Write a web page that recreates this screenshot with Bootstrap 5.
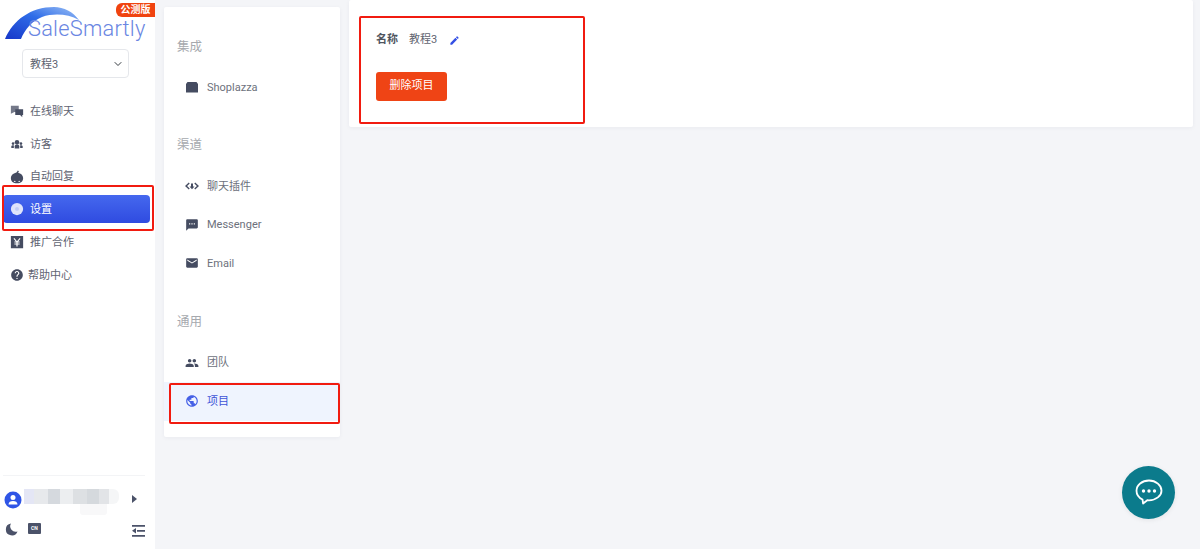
<!DOCTYPE html>
<html lang="zh-CN">
  <head>
    <meta charset="UTF-8" />
    <meta name="viewport" content="width=device-width, initial-scale=1.0" />
    <title>SaleSmartly</title>
    <link href="https://cdn.jsdelivr.net/npm/bootstrap@5.3.0/dist/css/bootstrap.min.css" rel="stylesheet" />
    <style>
      html, body { height: 100%; }
      body {
        background: #f4f5f8;
        overflow: hidden;
        font-family: Roboto, "Noto Sans CJK SC", sans-serif;
        font-size: 11px;
      }
      .page-wrap { height: 549px; }
      .side-bar { width: 155px; height: 549px; flex: none; background: #fff; }
      .logo-box { height: 42px; position: relative; }
      .logo-arc { position: absolute; left: 4px; top: 5px; }
      .logo-text {
        position: absolute; left: 28px; top: 14px;
        font-size: 21.8px; line-height: 30px; font-weight: 300;
        color: #6a86e2; letter-spacing: .25px;
      }
      .beta-tag {
        position: absolute; left: 116px; top: 3px; width: 39px; height: 13.5px;
        background: #f0430f; color: #fff; font-size: 10px; line-height: 13.5px; font-weight: 700;
        text-align: center; border-radius: 6px 0 0 6px;
      }
      .project-select {
        width: 107px; height: 29px; margin: 7px 0 0 22px; padding: 4px 20px 0 7px;
        font-size: 11px; color: #5d6270; border-color: #e5e7eb; border-radius: 4px;
        background-position: right 5px center; background-size: 10px 8px;
      }
      .side-menu { margin-top: 19px; }
      .side-item {
        height: 28px; margin: 0 5px 4.8px 3px; padding-left: 7px; gap: 6px;
        color: #5f6472; border-radius: 4px; font-size: 11px;
      }
      .side-item span { padding-top: 2px; }
      .side-item svg { width: 14px; height: 14px; fill: #454c61; flex: none; }
      .side-item.is-active { background: linear-gradient(180deg, #4568ee, #2f4be0); color: #fff; }
      .side-item.is-active svg { fill: #dfe4fb; }
      .side-item .help-label { margin-left: -2px; }
      .side-foot { margin-top: auto; padding: 0 0 7px 0; }
      .foot-user { margin: 0 10px 0 3px; border-top: 1px solid #f3f4f6; padding-top: 12px; position: relative; height: 41px; }
      .foot-avatar { display: block; margin: 2.5px 0 0 1px; }
      .blur-name {
        position: absolute; left: 21px; top: 13px; width: 95px; height: 15px;
        border-radius: 0 6px 6px 0;
        background: linear-gradient(90deg, #e4e6f5 0 10%, #e7e9ec 10% 25%, #d5d9de 25% 38%, #eceef0 38% 52%, #dde0e3 52% 66%, #d5d9dd 66% 79%, #e2e4e7 79% 89%, #f5f6f7 89%);
      }
      .blur-sub { position: absolute; left: 77px; top: 28px; width: 27px; height: 11px; background: #f8f8f9; border-radius: 0 0 3px 3px; }
      .foot-arrow { position: absolute; left: 129px; top: 19px; }
      .foot-tools { height: 26px; padding: 0 10px 0 5px; }
      .moon-icon { margin-right: 10px; }
      .cn-tag {
        display: inline-block; width: 13px; height: 11px; margin-top: -2px; background: #4b5269; color: #fff;
        font-size: 5px; line-height: 11px; text-align: center; border-radius: 1px; font-weight: 700;
      }
      .fold-icon { margin-top: 3px; }
      .sub-card { width: 176px; height: 430px; margin: 7px 9px 0 9px; flex: none; padding: 30px 0 0 0; }
      .panel-card { border: 0; border-radius: 2px; box-shadow: 0 1px 4px rgba(30, 40, 70, .05); background: #fff; }
      .sub-head { height: 20px; line-height: 20px; font-size: 12.5px; color: #a6a9ae; padding-left: 13px; margin-bottom: 11.5px; }
      .sub-group { margin-bottom: 29px; }
      .sub-group:first-child .sub-head { margin-bottom: 10.5px; }
      .sub-item { height: 38.7px; padding-left: 21px; gap: 8px; color: #6d717c; font-size: 11px; }
      .sub-item span { padding-top: 2px; }
      .sub-item svg { width: 14px; height: 14px; fill: #454c61; flex: none; }
      .sub-item.is-active { background: #eff4fe; color: #3f55d8; }
      .sub-item.is-active svg { fill: #4560e6; }
      .main-card { width: 844px; height: 127px; flex: none; padding: 33px 0 0 27px; }
      .field-name { font-weight: 700; color: #50555f; margin-right: 11px; }
      .field-value { color: #5f6470; margin-right: 12px; }
      .field-row { height: 15px; }
      .drop-btn {
        width: 71px; height: 29px; margin-top: 24px; padding: 0;
        background: #ef4415; border: 0; color: #fff; font-size: 11px; border-radius: 3px;
      }
      .note-box { position: absolute; border: 2.5px solid #f11b10; border-radius: 2px; pointer-events: none; }
      .note-a { left: 2px; top: 185px; width: 152px; height: 46px; }
      .note-b { left: 169px; top: 383px; width: 171px; height: 41px; }
      .note-c { left: 359px; top: 16px; width: 226px; height: 108px; }
      .chat-fab {
        position: fixed; left: 1122px; top: 465.5px; width: 53px; height: 53px; border-radius: 50%;
        background: #0b7b8c; box-shadow: 0 1px 5px rgba(0, 0, 0, .08);
      }
    </style>
  </head>
  <body>
    <div class="page-wrap d-flex">
      <aside class="side-bar d-flex flex-column">
        <div class="logo-box">
          <svg class="logo-arc" width="80" height="36" viewBox="0 0 80 36">
            <defs>
              <linearGradient id="arcFill" x1="0" y1="1" x2="1" y2="0">
                <stop offset="0" stop-color="#1737c9" />
                <stop offset=".55" stop-color="#2f6de8" />
                <stop offset="1" stop-color="#9cc0f5" />
              </linearGradient>
            </defs>
            <path d="M1 34C9 15 27 2 50 2c10 0 19 5 25 13C64 9 50 8 38 12 28 16 21 24 17 34z" fill="url(#arcFill)" />
          </svg>
          <span class="logo-text">SaleSmartly</span>
          <span class="beta-tag">公测版</span>
        </div>
        <select class="form-select project-select">
          <option>教程3</option>
        </select>
        <nav class="side-menu">
          <div class="side-item d-flex align-items-center">
            <svg viewBox="0 0 16 16"><path d="M1 2h9v7H5L1 11z" opacity=".75" /><path d="M6 6h9v6.500h-1V15l-2.500-2.500H6z" /></svg>
            <span>在线聊天</span>
          </div>
          <div class="side-item d-flex align-items-center">
            <svg viewBox="0 0 16 16"><circle cx="8" cy="6" r="2.600" /><path d="M5.400 13v-2.500c0-1.200 1.100-1.900 2.600-1.900s2.600.7 2.600 1.900V13z" /><circle cx="3.500" cy="7.500" r="1.500" /><circle cx="12.500" cy="7.500" r="1.500" /><path d="M1.500 12.500v-1.800c0-.9.8-1.400 2.900-1.400v3.200zM14.500 12.500v-1.800c0-.9-.8-1.400-2.900-1.400v3.200z" /></svg>
            <span>访客</span>
          </div>
          <div class="side-item d-flex align-items-center">
            <svg viewBox="0 0 16 16"><path fill-rule="evenodd" d="M8 3c4 0 7 2.800 7 6.300S12.500 15 8 15s-7-2.200-7-5.700S4 3 8 3zM5.500 12.200a.8.8 0 1 0 0 1.600.8.8 0 0 0 0-1.600zm5 0a.8.8 0 1 0 0 1.600.8.8 0 0 0 0-1.600z" /><path d="M7 3.500 9 .6l1.200.7L8.800 4z" /></svg>
            <span>自动回复</span>
          </div>
          <div class="side-item is-active d-flex align-items-center">
            <svg viewBox="0 0 16 16"><circle cx="8" cy="8" r="7" /><circle cx="8" cy="8" r="2.200" fill="#c3cdf7" /></svg>
            <span>设置</span>
          </div>
          <div class="side-item d-flex align-items-center">
            <svg viewBox="0 0 16 16"><path fill-rule="evenodd" d="M1 1h14v14H1zM5 3.500 8 7l3-3.500 1 .8L9.300 7.500H11v1.200H8.700v1H11v1.200H8.700V13H7.300v-2.100H5V9.700h2.300v-1H5V7.500h1.700L4 4.300z" /></svg>
            <span>推广合作</span>
          </div>
          <div class="side-item d-flex align-items-center">
            <svg viewBox="0 0 24 24"><path d="M12 2C6.480 2 2 6.480 2 12s4.480 10 10 10 10-4.480 10-10S17.520 2 12 2zm1 17h-2v-2h2v2zm2.070-7.750l-.9.92C13.450 12.900 13 13.500 13 15h-2v-.5c0-1.100.45-2.100 1.170-2.830l1.240-1.260c.37-.36.59-.86.59-1.410 0-1.100-.9-2-2-2s-2 .9-2 2H8c0-2.210 1.790-4 4-4s4 1.790 4 4c0 .88-.36 1.680-.93 2.250z" /></svg>
            <span class="help-label">帮助中心</span>
          </div>
        </nav>
        <div class="side-foot">
          <div class="foot-user">
            <svg class="foot-avatar" width="18" height="18" viewBox="0 0 18 18">
              <circle cx="9" cy="9" r="8.500" fill="#2f55e6" />
              <circle cx="9" cy="6.600" r="2.500" fill="#fff" />
              <path d="M4.500 13.500c0-2.300 2-3.400 4.500-3.400s4.500 1.100 4.500 3.400z" fill="#fff" />
            </svg>
            <span class="blur-name"></span>
            <span class="blur-sub"></span>
            <svg class="foot-arrow" width="5" height="8" viewBox="0 0 5 8"><path d="M0 0l5 4-5 4z" fill="#4b5269" /></svg>
          </div>
          <div class="foot-tools d-flex align-items-center">
            <svg class="moon-icon" width="13" height="13" viewBox="0 0 13 13"><path d="M6 .5a6 6 0 1 0 6.500 8A5.500 5.500 0 0 1 6 .5z" fill="#4b5269" /></svg>
            <span class="cn-tag">CN</span>
            <svg class="fold-icon ms-auto" width="13" height="12" viewBox="0 0 13 12"><path d="M0 0h13v1.700H0zM5 5h8v1.700H5zM0 10h13v1.700H0zM4 3v5.500L0 5.800z" fill="#4b5269" /></svg>
          </div>
        </div>
      </aside>

      <div class="panel-card sub-card">
        <div class="sub-group">
          <div class="sub-head">集成</div>
          <div class="sub-item d-flex align-items-center">
            <svg viewBox="0 0 14 14"><path d="M2.500 2h9l1.500 2v8.500H1V4z" /></svg>
            <span>Shoplazza</span>
          </div>
        </div>
        <div class="sub-group">
          <div class="sub-head">渠道</div>
          <div class="sub-item d-flex align-items-center">
            <svg viewBox="0 0 14 14"><path d="M3.800 3.500 0 7l3.800 3.500.9-1L2.100 7l2.600-2.500zM10.200 3.500l-.9 1L11.900 7 9.300 9.500l.9 1L14 7zM6 4.500h2v3h1.500L7 10.300 4.500 7.500H6z" /></svg>
            <span>聊天插件</span>
          </div>
          <div class="sub-item d-flex align-items-center">
            <svg viewBox="0 0 24 24"><path d="M20 2H4c-1.100 0-1.990.9-1.990 2L2 22l4-4h14c1.100 0 2-.9 2-2V4c0-1.100-.9-2-2-2zM9 11H7V9h2v2zm4 0h-2V9h2v2zm4 0h-2V9h2v2z" /></svg>
            <span>Messenger</span>
          </div>
          <div class="sub-item d-flex align-items-center">
            <svg viewBox="0 0 24 24"><path d="M20 4H4c-1.100 0-1.990.9-1.990 2L2 18c0 1.100.9 2 2 2h16c1.100 0 2-.9 2-2V6c0-1.100-.9-2-2-2zm0 4l-8 5-8-5V6l8 5 8-5v2z" /></svg>
            <span>Email</span>
          </div>
        </div>
        <div class="sub-group mb-0">
          <div class="sub-head">通用</div>
          <div class="sub-item d-flex align-items-center">
            <svg viewBox="0 0 24 24"><path d="M16 11c1.660 0 2.990-1.340 2.990-3S17.660 5 16 5c-1.660 0-3 1.340-3 3s1.340 3 3 3zm-8 0c1.660 0 2.990-1.340 2.990-3S9.660 5 8 5C6.340 5 5 6.340 5 8s1.340 3 3 3zm0 2c-2.330 0-7 1.170-7 3.500V19h14v-2.500c0-2.330-4.670-3.500-7-3.500zm8 0c-.29 0-.62.02-.97.05 1.160.84 1.970 1.970 1.970 3.450V19h6v-2.500c0-2.330-4.670-3.500-7-3.500z" /></svg>
            <span>团队</span>
          </div>
          <div class="sub-item is-active d-flex align-items-center">
            <svg viewBox="0 0 24 24"><path d="M12 2C6.480 2 2 6.480 2 12s4.480 10 10 10 10-4.480 10-10S17.520 2 12 2zm-1 17.930c-3.950-.49-7-3.850-7-7.930 0-.62.08-1.210.21-1.790L9 15v1c0 1.100.9 2 2 2v1.930zm6.900-2.540c-.26-.81-1-1.390-1.900-1.390h-1v-3c0-.55-.45-1-1-1H8v-2h2c.55 0 1-.45 1-1V7h2c1.100 0 2-.9 2-2v-.41c2.930 1.190 5 4.060 5 7.410 0 2.080-.8 3.970-2.100 5.390z" /></svg>
            <span>项目</span>
          </div>
        </div>
      </div>

      <main class="panel-card main-card">
        <div class="field-row d-flex align-items-center">
          <span class="field-name">名称</span>
          <span class="field-value">教程3</span>
          <svg width="11" height="11" viewBox="0 0 24 24"><path d="M3 17.250V21h3.750L17.810 9.940l-3.750-3.750L3 17.250zM20.710 7.040c.39-.39.39-1.020 0-1.410l-2.340-2.340c-.39-.39-1.020-.39-1.410 0l-1.830 1.830 3.750 3.750 1.830-1.830z" fill="#3450e4" /></svg>
        </div>
        <button class="btn drop-btn d-block" type="button">删除项目</button>
      </main>
    </div>

    <div class="note-box note-a"></div>
    <div class="note-box note-b"></div>
    <div class="note-box note-c"></div>

    <div class="chat-fab d-flex align-items-center justify-content-center">
      <svg width="30" height="30" viewBox="0 0 30 30">
        <path d="M15 3.500C8 3.500 2.500 8 2.500 13.700c0 3.800 2.400 7 6 8.800l.6 4 4.200-3.300c.6.1 1.100.1 1.700.1 7 0 12.500-4.500 12.500-9.600S22 3.500 15 3.500z" fill="none" stroke="#fff" stroke-width="1.800" stroke-linejoin="round" />
        <circle cx="9.500" cy="14" r="1.700" fill="#fff" />
        <circle cx="15" cy="14" r="1.700" fill="#fff" />
        <circle cx="20.500" cy="14" r="1.700" fill="#fff" />
      </svg>
    </div>

    <script src="https://cdn.jsdelivr.net/npm/bootstrap@5.3.0/dist/js/bootstrap.bundle.min.js"></script>
  </body>
</html>
